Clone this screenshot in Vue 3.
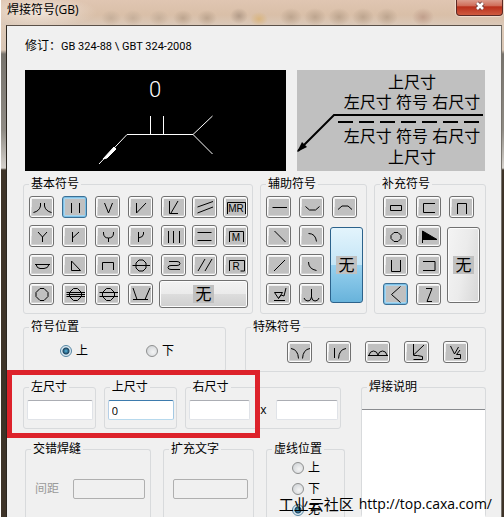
<template>
  <div class="window">
    <header class="title-bar">
      <h1 class="title">焊接符号(GB)</h1>
      <button class="close-btn" aria-label="关闭">
        <svg width="12" height="10" viewBox="0 0 12 10">
          <path d="M3 2l6 6M9 2l-6 6" stroke="#6b3a38" stroke-width="4.4" />
          <path d="M3 2l6 6M9 2l-6 6" stroke="#fff" stroke-width="2.6" />
        </svg>
      </button>
    </header>

    <main class="client">
      <p class="revision"><span>修订：</span><span class="latin">GB 324-88 \ GBT 324-2008</span></p>

      <div class="previews">
        <svg class="preview dark" viewBox="0 0 261 101">
          <text x="130" y="27" text-anchor="middle" class="cad-text">0</text>
          <path d="M74 94l28-29.5h66M125.5 46v18M138.5 46v18M187.500 46l-19.500 18.500l19.500 19.500M168 64.500h-20" class="thin-white" />
          <path d="M78 89l11-12 2 2-9 9z" fill="#fff" stroke="#fff" />
        </svg>
        <svg class="preview grey" viewBox="0 0 188 101">
          <text x="115" y="18">上尺寸</text>
          <text x="115" y="38">左尺寸 符号 右尺寸</text>
          <path d="M1 81L37 45h149" class="thick" />
          <path d="M41 52h143" class="thick" stroke-dasharray="15 6" />
          <path d="M0 82l5-10 5 5z" />
          <text x="115" y="72">左尺寸 符号 右尺寸</text>
          <text x="115" y="93">上尺寸</text>
        </svg>
      </div>

      <div class="symbol-groups">
        <fieldset v-for="group in symbolGroups" :key="group.name" class="group">
          <legend>{{ group.name }}</legend>
          <div class="symbol-grid" :class="group.layout">
            <button
              v-for="item in group.items"
              :key="item.name"
              class="symbol-btn"
              :class="{ active: selected[group.layout] === item.name }"
              :aria-label="item.name"
              @click="selected[group.layout] = item.name"
            >
              <svg width="23" height="20" viewBox="1 1 23 20">
                <rect x="3" y="3" width="20" height="16" class="icon-bg" />
                <path :d="item.d" :class="{ filled: item.filled }" />
                <text v-if="item.text" x="13" y="16">{{ item.text }}</text>
              </svg>
            </button>
            <button class="none-btn" :class="{ active: selected[group.layout] === 'none' }" @click="selected[group.layout] = 'none'">
              <span>无</span>
            </button>
          </div>
        </fieldset>
      </div>

      <div class="position-row">
        <fieldset class="group">
          <legend>符号位置</legend>
          <div class="position-options">
            <label><input v-model="symbolPosition" type="radio" name="position" value="up" />上</label>
            <label><input v-model="symbolPosition" type="radio" name="position" value="down" />下</label>
          </div>
        </fieldset>
        <fieldset class="group">
          <legend>特殊符号</legend>
          <div class="special-list">
            <button v-for="item in specialSymbols" :key="item.name" class="symbol-btn" :aria-label="item.name">
              <svg width="23" height="20" viewBox="1 1 23 20">
                <rect x="3" y="3" width="20" height="16" class="icon-bg" />
                <path :d="item.d" />
              </svg>
            </button>
          </div>
        </fieldset>
      </div>

      <div class="lower">
        <div class="lower-left">
          <div class="sizes">
            <fieldset class="group">
              <legend>左尺寸</legend>
              <div class="size-field"><input v-model="leftSize" type="text" aria-label="左尺寸" /></div>
            </fieldset>
            <fieldset class="group">
              <legend>上尺寸</legend>
              <div class="size-field"><input v-model="topSize" type="text" class="focused" aria-label="上尺寸" /></div>
            </fieldset>
            <fieldset class="group">
              <legend>右尺寸</legend>
              <div class="size-field">
                <input v-model="rightSize" type="text" aria-label="右尺寸" />
                <span class="times">x</span>
                <input v-model="rightLength" type="text" aria-label="右尺寸长度" />
              </div>
            </fieldset>
            <div class="highlight"></div>
          </div>

          <div class="extras">
            <fieldset class="group open">
              <legend>交错焊缝</legend>
              <div class="extra-field">
                <label for="spacing">间距</label>
                <input id="spacing" type="text" disabled />
              </div>
            </fieldset>
            <fieldset class="group open">
              <legend>扩充文字</legend>
              <div class="extra-field"><input type="text" aria-label="扩充文字" disabled /></div>
            </fieldset>
            <fieldset class="group open">
              <legend>虚线位置</legend>
              <div class="dash-options">
                <label><input v-model="dashPosition" type="radio" name="dash" value="up" />上</label>
                <label><input v-model="dashPosition" type="radio" name="dash" value="down" />下</label>
                <label><input v-model="dashPosition" type="radio" name="dash" value="none" />无</label>
              </div>
            </fieldset>
          </div>
        </div>

        <fieldset class="group open note">
          <legend>焊接说明</legend>
          <textarea v-model="note" aria-label="焊接说明"></textarea>
        </fieldset>
      </div>
    </main>

    <div class="watermark"><span>工业云社区</span><span class="url">http://top.caxa.com/</span></div>
  </div>
</template>

<script setup>
  import { reactive, ref } from 'vue'

  const selected = reactive({ basic: 'I形', assist: 'none', extra: '尾部' })
  const symbolPosition = ref('up')
  const dashPosition = ref('none')
  const leftSize = ref('')
  const topSize = ref('0')
  const rightSize = ref('')
  const rightLength = ref('')
  const note = ref('')

  const symbolGroups = [
    {
      name: '基本符号',
      layout: 'basic',
      items: [
        { name: '卷边', d: 'M11.5 7v3q-1 5-7 6.500M15.500 7v3q1 5 7 6.500' },
        { name: 'I形', d: 'M9.500 7v10M17.500 7v10' },
        { name: 'V形', d: 'M9.500 7l4 10 4-10' },
        { name: '单边V形', d: 'M8.500 7v10L18 7' },
        { name: '陡边', d: 'M8.500 5v12.500h8.500M10 17l7-12' },
        { name: '斜面', d: 'M5.500 11L21 5.500M5.500 17L21 11' },
        { name: 'MR', d: 'M4.500 18V6.500h18V18', text: 'MR' },
        { name: '钝边V形', d: 'M9 7l4.500 5L18 7M13.500 12v5' },
        { name: '钝边单边V形', d: 'M10.500 7v10M10.500 13L17 7' },
        { name: 'U形', d: 'M8.500 7v1q0 5 5 5t5-5V7M13.500 13v4' },
        { name: 'J形', d: 'M10.500 7v10M15.500 7v2q0 3-5 4' },
        { name: '三线', d: 'M7.500 6v12M12.500 6v12M18.500 6v12' },
        { name: '堆焊', d: 'M5.500 7.500h14M5.500 15.500h14' },
        { name: 'M', d: 'M6.500 17V6.500h14V17', text: 'M' },
        { name: '封底', d: 'M6 10.500h15M7 10.500q1 4 4 4h4q4 0 5-4' },
        { name: '角焊缝', d: 'M9.500 7v9.500h9z' },
        { name: '塞焊', d: 'M7.500 16V8.500h11V16' },
        { name: '缝焊', d: 'M4.500 11.500H22M11 6h4l3 3v5l-3 3h-4l-3-3V9z' },
        { name: '折叠', d: 'M8 7.500h8q3 0 3 2t-3 2h-6q-3 0-3 2t3 2h9' },
        { name: '斜线', d: 'M6 17l7-12M13 17l7-12' },
        { name: 'R', d: 'M6.500 17V6.500h15V17h-4', text: 'R' },
        { name: '点焊', d: 'M11 5.500h4l4 4v4l-4 4h-4l-4-4v-4z' },
        { name: '三线缝焊', d: 'M4.500 9.500H23M4.500 11.500H23M4.500 13.500H23M11.500 5.500h4l4 4v4l-4 4h-4l-4-4v-4z' },
        { name: '双线缝焊', d: 'M4.500 9.500H23M4.500 13.500H23M11.500 5.500h4l4 4v4l-4 4h-4l-4-4v-4z' },
        { name: '平底V形', d: 'M5 5l4 11.500M22 5l-5 11.500M5 16.500h15' },
      ],
    },
    {
      name: '辅助符号',
      layout: 'assist',
      items: [
        { name: '平面', d: 'M6.500 11.500H21' },
        { name: '凹面', d: 'M6.500 10.500l4 3.500h6l4-3.500' },
        { name: '凸面', d: 'M6 13.500l4-3.500h6l4 3.500' },
        { name: '左斜', d: 'M8.500 6l11 11' },
        { name: '右上弧', d: 'M9.500 8.500q7 0 8 8' },
        { name: '右斜', d: 'M8 17L19 6' },
        { name: '左下弧', d: 'M9.500 8q0 7 8 8.500' },
        { name: '光滑', d: 'M8.500 9.500h8l-4 6zM12.500 15.500L15 12l3 1 2-8M8 17.500h11' },
        { name: '圆滑过渡', d: 'M12.500 6v8M5 15q1 3 4 3t3.500-4q.5 4 3.500 4t4-3' },
      ],
    },
    {
      name: '补充符号',
      layout: 'extra',
      items: [
        { name: '衬垫', d: 'M7.500 9.500h11v5h-11z' },
        { name: '左开口', d: 'M19 7.500H7.500v9H19' },
        { name: '三面', d: 'M8.500 18V7.500h9V18' },
        { name: '周围', d: 'M11 7.500h4l3 3v3l-3 3h-4l-3-3v-3z' },
        { name: '现场', d: 'M6.500 18V6L21 14.500H6.500', filled: true },
        { name: '上开口', d: 'M8.500 6v11.500h9V6' },
        { name: '右开口', d: 'M7 7.500h12v9H7' },
        { name: '尾部', d: 'M17.500 3.500l-9 8 9 8' },
        { name: '交错', d: 'M10 5.500h6L11 18.500h5' },
      ],
    },
  ]

  const specialSymbols = [
    { name: '喇叭形', d: 'M4 7.500q7 1 7.500 10M23 7.500q-7 1-7.500 10' },
    { name: '单边喇叭形', d: 'M8.500 7v10M20 7.500q-7 1-7.500 10' },
    { name: '双弧', d: 'M3 14.500h20M4 14q1-4 4.500-4t4.500 4q1-4 4.500-4t4.500 4' },
    { name: '锁边', d: 'M9.500 3v11L20 4M9.500 14.500h4l5 1v3h-9' },
    { name: '带钝边锁边', d: 'M7.500 5l4 8 4-7M17 9l-3.500 4.500h4v4H11' },
  ]
</script>

<style>
  body {
    background-color: white;
  }
</style>

<style scoped>
  .window {
    position: relative;
    box-sizing: border-box;
    height: 100vh;
    display: flex;
    flex-direction: column;
    padding: 0 2px 2px 6px;
    overflow: hidden;
    font-family: 'Open Sans', 'Noto Sans CJK SC', sans-serif;
    font-size: 12px;
    line-height: 16px;
    color: #000;
    background:
      linear-gradient(#fff, #fff) left / 1px 100% no-repeat,
      linear-gradient(#fff, #fff) bottom / 100% 2px no-repeat,
      linear-gradient(#e4cfba 0, #d9c6b5 50px, #77736d 54px, #8f8b84 130px, #d6d2cd 168px, #3d3328 170px, #3d3328 100%);
  }

  button,
  input,
  textarea {
    box-sizing: border-box;
    margin: 0;
    font-family: inherit;
    font-size: inherit;
    color: inherit;
  }

  .title-bar {
    display: flex;
    justify-content: space-between;
    align-items: flex-start;
    height: 25px;
    flex-shrink: 0;
    margin: 0 -2px 0 -5px;
    background:
      radial-gradient(ellipse 9px 8px at 238px 16px, #b39c89, transparent),
      radial-gradient(ellipse 9px 7px at 258px 19px, #d9b57f, transparent),
      radial-gradient(ellipse 11px 9px at 290px 17px, #bda58f, transparent),
      radial-gradient(ellipse 11px 9px at 314px 17px, #bda58f, transparent),
      radial-gradient(ellipse 11px 9px at 338px 17px, #bda58f, transparent),
      radial-gradient(ellipse 11px 9px at 362px 17px, #bda58f, transparent),
      radial-gradient(ellipse 11px 9px at 386px 17px, #bda58f, transparent),
      radial-gradient(ellipse 11px 9px at 422px 17px, #c09f8c, transparent),
      radial-gradient(ellipse 10px 8px at 110px 18px, #c6af9a, transparent),
      radial-gradient(ellipse 10px 8px at 132px 18px, #c6af9a, transparent),
      radial-gradient(ellipse 10px 8px at 158px 18px, #c6af9a, transparent),
      radial-gradient(ellipse 10px 8px at 182px 18px, #bda58f, transparent),
      radial-gradient(ellipse 10px 8px at 206px 18px, #bda58f, transparent),
      radial-gradient(ellipse 60px 16px at 36px 12px, #f1e6dc, transparent),
      linear-gradient(#e0c6b2, #d9bfa8 60%, #dac8b8);
  }

  .title {
    margin: 2px 0 0 6px;
    font-size: 12px;
    line-height: 16px;
    font-weight: normal;
  }

  .close-btn {
    width: 47px;
    height: 16px;
    margin-right: 1px;
    padding: 0 0 3px;
    display: flex;
    align-items: center;
    justify-content: center;
    border: 1px solid #5c2a25;
    border-top: none;
    border-radius: 0 0 4px 4px;
    background: linear-gradient(#dc9c8c 0, #cf6b57 40%, #b92f1b 45%, #cf5a3f 100%);
    box-shadow: 0 0 1px 1px #f0ddd0;
  }

  .client {
    flex: 1;
    min-height: 0;
    display: flex;
    flex-direction: column;
    padding: 12px 15px 0 16px;
    border-top: 1px solid #5a5048;
    border-left: 1px solid #2b2620;
    border-right: 1px solid #77736d;
    background-color: #f0f0f0;
    overflow: hidden;
  }

  .revision {
    height: 16px;
    margin: 0 0 16px 2px;
  }

  .latin {
    font-family: Roboto, sans-serif;
    font-size: 11px;
  }

  .previews {
    display: grid;
    grid-template-columns: 261fr 188fr;
    gap: 11px;
    margin: 0 1px 5px 2px;
  }

  .preview {
    width: 100%;
    display: block;
  }

  .dark {
    background-color: #000;
  }

  .cad-text {
    font-family: Roboto, sans-serif;
    font-size: 22px;
    font-weight: 300;
    fill: #fff;
  }

  .thin-white {
    fill: none;
    stroke: #fff;
  }

  .grey {
    background-color: #c0c0c0;
    font-size: 16px;
    text-anchor: middle;
  }

  .thick {
    fill: none;
    stroke: #000;
    stroke-width: 2;
  }

  .group {
    min-width: 0;
    margin: 0;
    padding: 0;
    border: 1px solid #d8dadc;
    border-radius: 3px;
  }

  .group.open {
    border-bottom: none;
  }

  legend {
    margin-left: 5px;
    padding: 0 2px;
  }

  .symbol-groups {
    display: grid;
    grid-template-columns: 230fr 107fr 112fr;
    gap: 7px;
    margin-bottom: 5px;
  }

  .symbol-grid {
    display: grid;
    grid-auto-rows: 22px;
    row-gap: 7px;
    justify-content: start;
    padding: 4px 5px 8px;
  }

  .basic {
    grid-template-columns: repeat(4, 33px) 31px 31px 25px;
  }

  .assist,
  .extra {
    grid-template-columns: 33px 33px 31px;
  }

  .extra {
    padding-left: 8px;
  }

  .assist .symbol-btn:nth-child(n + 4),
  .extra .symbol-btn:nth-child(n + 4) {
    grid-column: 1;
  }

  .assist .symbol-btn:nth-child(2n + 5),
  .extra .symbol-btn:nth-child(2n + 5) {
    grid-column: 2;
  }

  .symbol-btn,
  .none-btn {
    border: 1px solid #707070;
    border-radius: 3px;
    background: linear-gradient(#f2f2f2, #ebebeb 50%, #dddddd 50%, #cfcfcf);
    box-shadow: inset 0 0 0 1px #fcfcfc;
    cursor: pointer;
    padding: 0;
  }

  .symbol-btn {
    width: 25px;
    height: 22px;
  }

  .symbol-btn svg {
    display: block;
  }

  .symbol-btn path {
    fill: none;
    stroke: #000;
  }

  .symbol-btn path.filled {
    fill: #000;
  }

  .symbol-btn text {
    font-family: 'Liberation Sans', sans-serif;
    font-size: 10px;
    text-anchor: middle;
  }

  .icon-bg {
    fill: #c0c0c0;
  }

  .symbol-btn.active {
    border-color: #3c6f94;
    background: #a9d5ee;
    box-shadow: inset 0 0 0 1px #7cc0e6;
  }

  .none-btn {
    font-size: 16px;
    line-height: 18px;
  }

  .none-btn span {
    display: inline-block;
    background-color: #c0c0c0;
    padding: 0 2px;
  }

  .basic .none-btn {
    grid-column: 5 / 8;
    align-self: center;
    height: 28px;
    margin-left: -2px;
  }

  .assist .none-btn,
  .extra .none-btn {
    grid-column: 3;
    grid-row: 2 / 5;
    height: 76px;
    margin-top: 2px;
    margin-left: -2px;
  }

  .extra .none-btn {
    background: linear-gradient(100deg, #f4f4f4, #ebebeb 50%, #d6d6d6);
  }

  .none-btn.active {
    border-color: #2c628b;
    background: linear-gradient(#e3f4fc, #c4e5f6 50%, #98d1ef 50%, #68b3db);
    box-shadow: none;
  }

  .position-row {
    display: grid;
    grid-template-columns: 203fr 241fr;
    gap: 19px;
    margin-bottom: 7px;
  }

  .position-options {
    display: flex;
    gap: 58px;
    padding: 8px 0 0 36px;
  }

  label {
    display: flex;
    align-items: center;
    gap: 4px;
  }

  input[type='radio'] {
    appearance: none;
    width: 12px;
    height: 12px;
    border: 1px solid #8e8f8f;
    border-radius: 50%;
    background: radial-gradient(circle at 60% 60%, #f4f4f4, #c9cdd1);
  }

  input[type='radio']:checked {
    border-color: #5586a3;
    background: radial-gradient(circle, #55b5dd 0, #1b4460 3px, #dceaf3 4px);
  }

  .special-list {
    display: flex;
    gap: 14px;
    padding: 6px 0 8px 41px;
  }

  .lower {
    flex: 1;
    min-height: 0;
    display: grid;
    grid-template-columns: 322fr 125fr;
    gap: 16px;
  }

  .lower-left {
    display: flex;
    flex-direction: column;
    min-height: 0;
  }

  .sizes {
    position: relative;
    display: grid;
    grid-template-columns: 73fr 73fr 157fr;
    gap: 8px;
    margin: 0 4px 12px 0;
  }

  .size-field {
    display: flex;
    align-items: center;
    padding: 5px 2px 8px 3px;
  }

  input[type='text'] {
    flex: 1;
    min-width: 0;
    height: 20px;
    padding: 0 3px;
    border: 1px solid #e0e3e8;
    border-top-color: #abadb3;
    border-radius: 2px;
    background-color: white;
    font-size: 11px;
  }

  input[type='text'].focused {
    border-color: #3d7bad #a4c9e3 #b7d9ed #b5cfe7;
  }

  input[type='text']:disabled {
    background-color: #f0f0f0;
    border-color: #afafaf;
  }

  .times {
    width: 26px;
    text-align: center;
  }

  /* red frame that points at the size inputs */
  .highlight {
    position: absolute;
    top: -9px;
    bottom: -9px;
    left: -16px;
    right: 81px;
    border: 5px solid #dd222b;
    pointer-events: none;
  }

  .extras {
    flex: 1;
    min-height: 0;
    display: grid;
    grid-template-columns: 126fr 91fr 79fr;
    gap: 12px;
    margin-left: 2px;
  }

  .extra-field {
    display: flex;
    align-items: center;
    padding: 22px 5px 0 9px;
  }

  .extra-field label {
    width: 38px;
    color: #9a9a9a;
  }

  .dash-options {
    padding-left: 25px;
  }

  .dash-options label {
    height: 21px;
  }

  .note {
    display: flex;
    flex-direction: column;
    padding-top: 14px;
  }

  .note textarea {
    flex: 1;
    width: 100%;
    resize: none;
    border: none;
    border-top: 1px solid #8a8c90;
    background-color: white;
  }

  .watermark {
    position: absolute;
    right: 12px;
    bottom: 5px;
    display: flex;
    align-items: center;
    gap: 5px;
    font-size: 15px;
    line-height: 20px;
    pointer-events: none;
  }

  .url {
    font-size: 14px;
  }
</style>
